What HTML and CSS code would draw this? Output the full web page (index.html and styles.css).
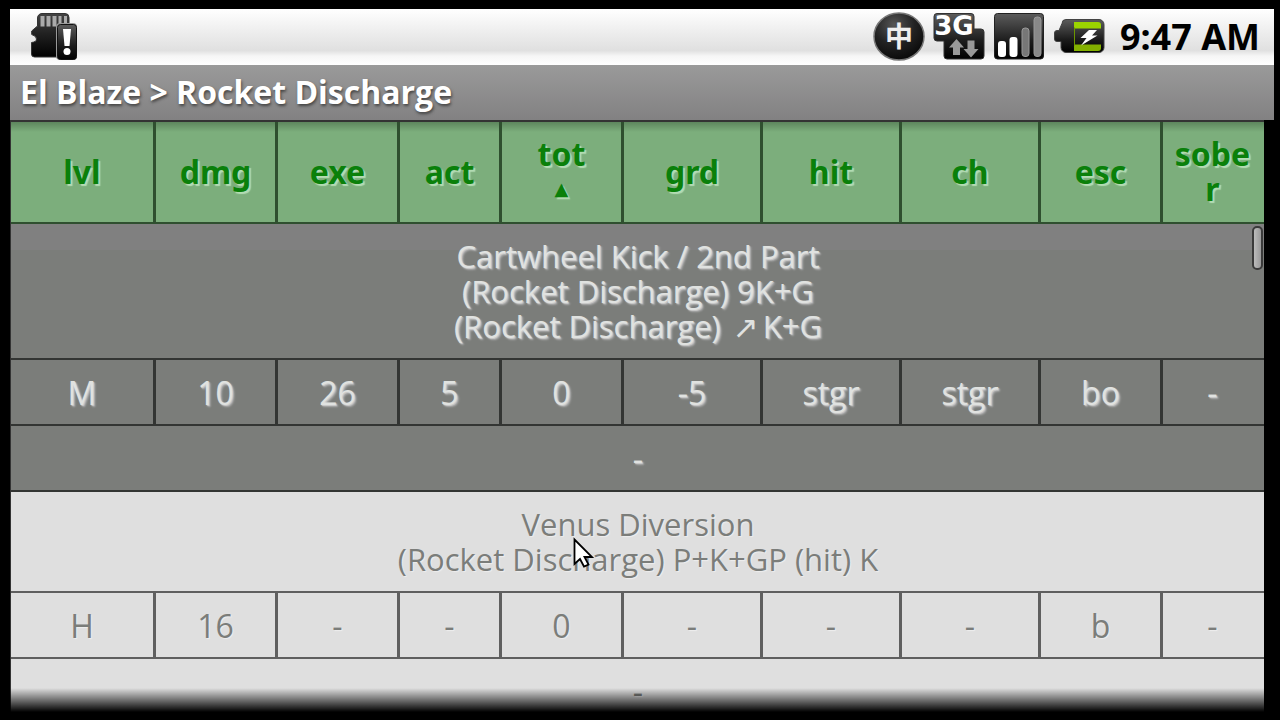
FILE: index.html
```html
<!DOCTYPE html>
<html lang="en">
<head>
<meta charset="utf-8">
<meta name="viewport" content="width=device-width, initial-scale=1">
<title>El Blaze &gt; Rocket Discharge</title>
<link rel="stylesheet" href="styles.css">
</head>
<body>
<div class="screen">
  <header class="status-bar">
    <svg class="icon-sd" width="48" height="50" viewBox="0 0 48 50" role="img" aria-label="SD card warning">
      <defs>
        <linearGradient id="dark" x1="0" y1="0" x2="0" y2="1"><stop offset="0" stop-color="#5c5c5c"/><stop offset="0.6" stop-color="#1c1c1c"/><stop offset="1" stop-color="#000"/></linearGradient>
        <linearGradient id="card" x1="0" y1="0" x2="0" y2="1"><stop offset="0" stop-color="#444"/><stop offset="0.45" stop-color="#222"/><stop offset="1" stop-color="#000"/></linearGradient>
      </defs>
      <path d="M12 1.500h23a4 4 0 0 1 4 4V45H4.500a3 3 0 0 1-3-3V30.500q5-.5 5-3.500t-4.800-4.500V19l5.800-5V6a4.500 4.500 0 0 1 4.500-4.500z" fill="url(#card)" stroke="#333"/>
      <path d="M10.500 4h4v10.500h-4zM16.500 4h4v10.500h-4zM22.500 4h4v10.500h-4zM28.500 4h3v8h-3zM34 4h3v7h-3z" fill="#aaa"/>
      <rect x="26" y="11" width="21" height="37" rx="4" fill="#999"/>
      <rect x="27.500" y="12.500" width="19" height="35" rx="3" fill="url(#dark)" stroke="#111"/>
      <path d="M33 17h8l-1.500 17h-5z" fill="#fff"/><circle cx="37" cy="39.500" r="3.500" fill="#fff"/>
    </svg>
    <div class="status-icons">
      <svg width="52" height="50" viewBox="0 0 52 50" role="img" aria-label="Chinese input">
        <defs><radialGradient id="ball" cx="0.4" cy="0.25" r="0.75"><stop offset="0" stop-color="#555"/><stop offset="0.55" stop-color="#222"/><stop offset="1" stop-color="#0a0a0a"/></radialGradient></defs>
        <ellipse cx="26" cy="24.500" rx="25" ry="23.500" fill="url(#ball)" stroke="#777" stroke-width="1.500"/>
        <text x="26" y="34.500" class="icon-ime">中</text>
      </svg>
      <svg width="52" height="50" viewBox="0 0 52 50" role="img" aria-label="3G data">
        <path d="M4 1.500h34a3 3 0 0 1 3 3V17h7a3 3 0 0 1 3 3v24a3 3 0 0 1-3 3H14a3 3 0 0 1-3-3V29H4a3 3 0 0 1-3-3V4.500a3 3 0 0 1 3-3z" fill="url(#dark)" stroke="#333"/>
        <text x="21" y="23" class="icon-3g">3G</text>
        <path d="M23.500 27l7.500 8.500h-4V43h-7v-7.500h-4zM38 45.500L30.500 37h4v-8.500h7V37h4z" fill="#999"/>
      </svg>
      <svg width="52" height="50" viewBox="0 0 52 50" role="img" aria-label="Signal strength">
        <rect x="1.500" y="1.500" width="49" height="45.500" rx="3" fill="url(#dark)" stroke="#222"/>
        <rect x="5" y="29" width="8" height="16" rx="3" fill="#fff"/>
        <rect x="16.500" y="25" width="8" height="20" rx="3" fill="#fff"/>
        <rect x="29" y="16" width="7" height="28.500" rx="3" fill="#777" stroke="#999"/>
        <rect x="41" y="5" width="7" height="39.500" rx="3" fill="#888" stroke="#999"/>
      </svg>
      <svg width="52" height="50" viewBox="0 0 52 50" role="img" aria-label="Battery charging">
        <path d="M13 7.500h33a5 5 0 0 1 5 5v23a5 5 0 0 1-5 5H13a5 5 0 0 1-5-5v-6H4a2.500 2.500 0 0 1-2.500-2.500v-6A2.500 2.500 0 0 1 4 18.500h2l3-7a4 4 0 0 1 4-4z" fill="url(#dark)" stroke="#444"/>
        <path d="M21 10h24a3 3 0 0 1 3 3v3.500H21z" fill="#9bd400"/>
        <path d="M21 32.500h27V36a3 3 0 0 1-3 3H21z" fill="#83b000"/>
        <path d="M21 15.500h1v18h-1z" fill="#6b9500"/>
        <path d="M36 18h8l-5 5.500h5.500L28 33.500l5.500-7.500h-6z" fill="#fff"/>
      </svg>
    </div>
    <time class="clock">9:47 AM</time>
  </header>
  <h1 class="title-bar">El Blaze &gt; Rocket Discharge</h1>
  <main class="content">
    <table class="moves">
      <colgroup>
        <col class="w-lvl"><col class="w-mid"><col class="w-mid"><col class="w-small"><col class="w-mid">
        <col class="w-wide"><col class="w-wide"><col class="w-wide"><col class="w-mid"><col class="w-small">
      </colgroup>
      <thead>
        <tr>
          <th scope="col"><button type="button">lvl</button></th>
          <th scope="col"><button type="button">dmg</button></th>
          <th scope="col"><button type="button">exe</button></th>
          <th scope="col"><button type="button">act</button></th>
          <th scope="col" aria-sort="ascending"><button type="button">tot<span class="sort-mark">▲</span></button></th>
          <th scope="col"><button type="button">grd</button></th>
          <th scope="col"><button type="button">hit</button></th>
          <th scope="col"><button type="button">ch</button></th>
          <th scope="col"><button type="button">esc</button></th>
          <th scope="col"><button type="button">sober</button></th>
        </tr>
      </thead>
      <tbody class="dark">
        <tr class="name"><td colspan="10">Cartwheel Kick / 2nd Part<br>(Rocket Discharge) 9K+G<br>(Rocket Discharge) <span class="arrow">↗</span>K+G</td></tr>
        <tr><td>M</td><td>10</td><td>26</td><td>5</td><td>0</td><td>-5</td><td>stgr</td><td>stgr</td><td>bo</td><td>-</td></tr>
        <tr><td colspan="10">-</td></tr>
      </tbody>
      <tbody class="light">
        <tr class="name"><td colspan="10">Venus Diversion<br>(Rocket Discharge) P+K+GP (hit) K</td></tr>
        <tr><td>H</td><td>16</td><td>-</td><td>-</td><td>0</td><td>-</td><td>-</td><td>-</td><td>b</td><td>-</td></tr>
        <tr><td colspan="10">-</td></tr>
      </tbody>
    </table>
    <div class="scroll-thumb"></div>
    <div class="fade"></div>
  </main>
</div>
<svg class="pointer" width="22" height="32" viewBox="0 0 22 32" aria-hidden="true">
  <path d="M1.500 2.500V27l5.500-5 4 7.500 4.500-2-4-7.500H19z" fill="#fff" stroke="#000" stroke-width="1.800"/>
</svg>
</body>
</html>
```

FILE: styles.css
```css
* { box-sizing: border-box; }
body {
  margin: 0;
  background: #000;
  font-family: "Open Sans", "Noto Sans", sans-serif;
  overflow: hidden;
}
.screen {
  display: flex;
  flex-direction: column;
  height: 100vh;
  padding: 9px 6px 8px 10px;
}
.status-bar {
  display: flex;
  align-items: center;
  flex: none;
  height: 56px;
  padding: 0 14px 0 20px;
  background: linear-gradient(#fff, #f0f0f0 35%, #e0e0e0 74%, #f6f6f6 84%, #fff);
}
.status-icons {
  display: flex;
  gap: 8px;
  margin-left: auto;
}
.icon-ime {
  font: bold 28px "Noto Sans CJK SC", sans-serif;
  fill: #eee;
  text-anchor: middle;
}
.icon-3g {
  font: bold 26px "DejaVu Sans", sans-serif;
  fill: #fff;
  text-anchor: middle;
}
.clock {
  margin-left: 15px;
  font-family: "Noto Sans", sans-serif;
  font-size: 36px;
  line-height: 40px;
  font-weight: bold;
  color: #000;
}
.title-bar {
  flex: none;
  margin: 0;
  padding: 7px 10px 8px;
  background: linear-gradient(#9a9a9a, #828182);
  color: #fff;
  font-size: 32px;
  line-height: 40px;
  font-weight: bold;
  text-shadow: 1px 2px 3px #444;
}
.content {
  position: relative;
  flex: 1;
  min-height: 0;
  margin-right: 10px;
  overflow: hidden;
}
.moves {
  width: 100%;
  table-layout: fixed;
  border-collapse: separate;
  border-spacing: 0;
  border: 0 solid #333;
  border-width: 2px 1px 0;
  font-size: 32px;
  line-height: 35px;
  text-align: center;
}
.w-lvl { width: 145px; }
.w-mid { width: 122px; }
.w-small { width: 102px; }
.w-wide { width: 139px; }
.moves th,
.moves td {
  border: 0 solid #333533;
  border-width: 0 3px 2px 0;
}
.moves td { padding: 15px 0 14px; }
.moves .name td { font-size: 31px; }
.moves th:last-child,
.moves td:last-child { border-right-width: 0; }
.moves td:last-child:not([colspan]) { padding-right: 3px; }
.moves th {
  padding: 14px 10px 16px;
  border-color: #2f4f2f;
  background: linear-gradient(#5d865d, #7cae7c 10px);
  font-family: "Noto Sans", sans-serif;
  vertical-align: middle;
}
.moves th:last-child { padding-right: 13px; }
.moves button {
  display: block;
  width: 100%;
  margin: 0;
  padding: 0;
  border: 0;
  background: none;
  color: #0a800a;
  font: inherit;
  text-shadow: 2px 2px 1px #b4dcb4;
  overflow-wrap: anywhere;
}
.sort-mark {
  display: block;
  font-family: "DejaVu Sans", sans-serif;
  font-size: 18px;
  font-weight: normal;
}
.dark td {
  background: #7b7d7a;
  color: #e0e2e0;
  text-shadow: 1px 1px 1px #ccc, 2px 2px 2px #aaa;
}
.dark .name td { background: linear-gradient(#808080 26px, #7b7d7a 26px); }
.light td {
  border-color: #5f5f5f;
  background: #dfdfdf;
  color: #7b7d7a;
  text-shadow: 1px 1px 1px #eee;
}
.arrow {
  margin: 0 4px;
  font-family: "DejaVu Sans", sans-serif;
  font-size: 31px;
  line-height: 30px;
  text-shadow: none;
}
.scroll-thumb {
  position: absolute;
  top: 106px;
  right: 1px;
  width: 11px;
  height: 44px;
  border: 2px solid #3a3a3a;
  border-radius: 5px;
  background: linear-gradient(90deg, #bbb, #999);
}
.fade {
  position: absolute;
  left: 0;
  right: 0;
  bottom: 0;
  height: 24px;
  background: linear-gradient(transparent, #000);
}
.pointer {
  position: absolute;
  left: 573px;
  top: 537px;
}
```
